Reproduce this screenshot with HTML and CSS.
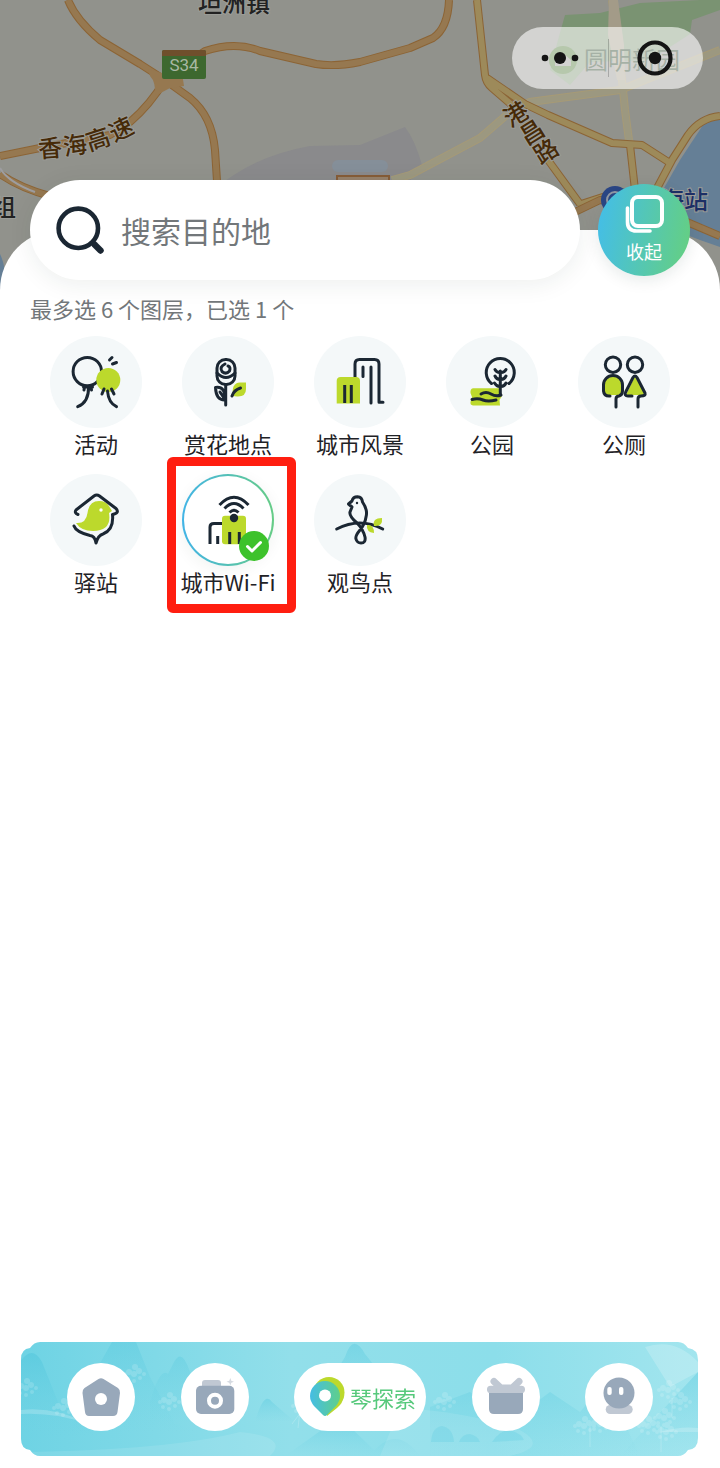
FILE: index.html
```html
<!DOCTYPE html>
<html lang="zh-CN">
<head>
    <meta charset="UTF-8" />
    <meta name="viewport" content="width=device-width, initial-scale=1.0" />
    <title>琴探索</title>
    <link rel="stylesheet" href="styles.css">
</head>
<body>
    <div class="app">
        <svg class="map" viewBox="0 0 720 300" preserveAspectRatio="xMidYMin slice">
            <rect width="720" height="300" fill="#91928c" />
            <!-- areas -->
            <path d="M225 181Q260 155 310 146L360 145 405 127Q415 140 422 165L410 181Z" fill="#8a8a8c" />
            <rect x="332" y="160" width="56" height="12" rx="6" fill="#858f99" />
            <path d="M565 15L600 13 640 3 700 0H720V10L692 20 690 34 650 60 590 62 570 85 550 70 558 40Z" fill="#7a9372" />
            <path d="M720 118L705 122 680 160 664 188 660 225 700 240 720 247Z" fill="#657f96" />
            <path d="M0 254Q8 270 4 300H0Z" fill="#657f96" />
            <!-- small roads -->
            <g fill="none" stroke="#a69a76" stroke-width="8">
                <path d="M392 180L410 175 480 138 510 112 530 102 620 90 720 50" />
                <path d="M612 0Q616 30 620 60L625 110 630 148" />
            </g>
            <g fill="none" stroke="#9c9880" stroke-width="6">
                <path d="M392 180L410 175 480 138 510 112 530 102 620 90 720 50" />
                <path d="M612 0Q616 30 620 60L625 110 630 148" />
            </g>
            <path d="M609 0H618L624 45 625 80H617L608 35Z" fill="#a39b88" />
            <!-- main roads -->
            <g class="road road-edge">
                <path d="M477 0L485 75Q486 83 492 88L520 112M487 78L525 104 548 115 612 143 642 145 670 163M548 160L580 204" />
                <path d="M630 145L635 190M578 205L615 193 655 192 672 160 688 135Q700 118 720 116" />
            </g>
            <g class="road road-yellow">
                <path d="M477 0L485 75Q486 83 492 88L520 112M487 78L525 104 548 115 612 143 642 145 670 163M548 160L580 204" />
                <path d="M630 145L635 190M578 205L615 193 655 192 672 160 688 135Q700 118 720 116" />
            </g>
            <g class="road road-edge">
                <path d="M68 0Q76 20 100 40L140 64 165 80M165 78L205 51Q235 41 260 51L316 64Q335 67 360 62L410 48 433 38Q448 28 449 0" />
                <path d="M165 80Q150 105 130 122L110 135 40 148 0 156M165 80L190 98Q212 116 215 150L217 181M0 174Q20 188 50 196M575 212L600 200 640 202 720 236" />
            </g>
            <g class="road road-orange">
                <path d="M68 0Q76 20 100 40L140 64 165 80M165 78L205 51Q235 41 260 51L316 64Q335 67 360 62L410 48 433 38Q448 28 449 0" />
                <path d="M165 80Q150 105 130 122L110 135 40 148 0 156M165 80L190 98Q212 116 215 150L217 181M0 174Q20 188 50 196M575 212L600 200 640 202 720 236" />
            </g>
            <path d="M148 69L162 73H182L184 86 170 88 155 96Q156 82 150 76Z" fill="#967850" />
            <path d="M0 168Q8 182 35 192" fill="none" stroke="#9d9da0" stroke-width="2" />
            <rect x="337" y="176" width="52" height="8" fill="#96806b" stroke="#865c38" stroke-width="2" />
            <!-- road sign -->
            <rect x="162" y="50" width="44" height="29" rx="2" fill="#3d682f" />
            <path d="M162 56V52q0-2 2-2H204q2 0 2 2V56Z" fill="#6f4f2c" />
            <text class="sign" x="184" y="71">S34</text>
            <!-- labels -->
            <g class="place">
                <text x="198" y="12">坦洲镇</text>
                <text x="-8" y="216">组</text>
            </g>
            <g class="road-name">
                <text transform="translate(50 148) rotate(-4)" y="9">香</text>
                <text transform="translate(75 145) rotate(-9)" y="9">海</text>
                <text transform="translate(98 139) rotate(-18)" y="9">高</text>
                <text transform="translate(121 129) rotate(-26)" y="9">速</text>
                <text transform="translate(516 114) rotate(-32)" y="9">港</text>
                <text transform="translate(532 132) rotate(-32)" y="9">昌</text>
                <text transform="translate(546 151) rotate(-32)" y="9">路</text>
            </g>
            <circle cx="563" cy="60" r="14" fill="#4a7631" />
            <path d="M555 66V60L563 53 571 60V66Z" fill="#91928c" />
            <text class="park-name" x="584" y="69">圆明新园</text>
            <circle cx="615" cy="200" r="14" fill="#2b4685" />
            <circle cx="615" cy="200" r="8" fill="none" stroke="#9299a6" stroke-width="2" />
            <text class="station-name" x="636" y="209">珠海站</text>
        </svg>

        <div class="capsule">
            <button type="button" class="capsule-btn" aria-label="更多">
                <svg width="40" height="16" viewBox="0 0 40 16" fill="#141414"><circle cx="5" cy="8" r="3.300" /><circle cx="20" cy="8" r="6" /><circle cx="35" cy="8" r="3.300" /></svg>
            </button>
            <button type="button" class="capsule-btn" aria-label="关闭">
                <svg width="36" height="36" viewBox="0 0 36 36"><circle cx="18" cy="18" r="15.5" fill="none" stroke="#141414" stroke-width="4.2" /><circle cx="18" cy="18" r="6.2" fill="#141414" /></svg>
            </button>
        </div>

        <main class="sheet">
            <div class="search-row">
                <label class="search-box">
                    <svg width="48" height="48" viewBox="0 0 48 48" fill="none" stroke="#1b2733" stroke-linecap="round"><circle cx="22.3" cy="22.3" r="19.7" stroke-width="4.6" /><path d="M38.5 38.5L44.5 44.5" stroke-width="6.4" /></svg>
                    <input type="text" id="searchInput" placeholder="搜索目的地" aria-label="搜索目的地" />
                </label>
                <button type="button" class="fold-btn">
                    <svg width="40" height="40" viewBox="0 0 40 40" fill="none" stroke="#fff" stroke-linecap="round"><rect x="8" y="3" width="30" height="29" rx="6" stroke-width="4" /><path d="M3.500 14V28Q3.500 37 12.500 37H26" stroke-width="3.600" /></svg>
                    <span>收起</span>
                </button>
            </div>

            <p class="hint">最多选 6 个图层，已选 1 个</p>

            <div class="layers">
                <button type="button" class="layer" aria-pressed="false">
                    <svg class="layer-icon" viewBox="0 0 92 92">
                        <circle class="line" cx="37.3" cy="35.6" r="14.2" />
                        <circle class="lime" cx="58.3" cy="44" r="12" />
                        <path class="line" d="M33.5 51H42.5M34.5 51L34 54M41 51L41.500 54M38.500 51Q39 66 27.700 70.700M57.500 55Q58.500 67 66.500 70.700M54 53L52 58M61.500 53L64 58" />
                        <path class="line" d="M59.5 24L62 21.5M62.5 28L66.5 26.5" />
                    </svg>
                    <span>活动</span>
                </button>
                <button type="button" class="layer" aria-pressed="false">
                    <svg class="layer-icon" viewBox="0 0 92 92">
                        <path class="lime" d="M51 60Q49 47 58 46.500H64V53Q64 61 55 60.500Z" />
                        <rect class="line" x="35" y="23.5" width="18" height="25" rx="8.5" />
                        <path class="line" d="M35 37Q44 46 53 37M43 28Q37 31 40 35.500Q44 39 47.500 35Q49 31 46 30" />
                        <path class="line" d="M43.700 49V69M33.500 51.500Q44 50 42.500 64Q34 64 33.500 51.500ZM38 56L42 62M50 60Q52 54 58.500 52" />
                    </svg>
                    <span>赏花地点</span>
                </button>
                <button type="button" class="layer" aria-pressed="false">
                    <svg class="layer-icon" viewBox="0 0 92 92">
                        <path class="line" d="M41 42V28Q41 23.500 45.500 23.500H60.500Q65 23.500 65 28V66.300H69M49 31V40.500M57 31V67" />
                        <path class="lime" d="M22.700 67.500V45Q22.700 41 26.700 41H42Q46 41 46 45V67.500Z" />
                        <path class="line flat" d="M30.700 49V67M37.300 49V67" />
                    </svg>
                    <span>城市风景</span>
                </button>
                <button type="button" class="layer" aria-pressed="false">
                    <svg class="layer-icon" viewBox="0 0 92 92">
                        <path class="lime" d="M27 52.300H54L56 60 53.500 64 54 69.500H27Q24 69 24.500 66L26 61 24.500 57Q24 53 27 52.300Z" />
                        <path class="line" d="M45.500 47.500A14 14 0 1 1 63 47.500M54.300 35V58M49 33.500Q51 37 54.300 36.500Q58 37 60 33.500M49 40Q51 44 54.300 43.500Q58 44 60 40M48.500 47Q51 51 54.300 50.500Q58 51 60 47" />
                        <path class="line" d="M35 58Q40 55 45 58T55 59M26 63.500Q32 62 37 64T50 64" />
                    </svg>
                    <span>公园</span>
                </button>
                <button type="button" class="layer" aria-pressed="false">
                    <svg class="layer-icon" viewBox="0 0 92 92">
                        <circle class="line" cx="35" cy="28.7" r="7.7" />
                        <circle class="line" cx="57" cy="28.7" r="7.7" />
                        <path class="lime" d="M25.500 49A9.500 9.500 0 0 1 44.500 49V59H29Q25.500 58 25.500 54ZM57 40L67 58Q66 60 60 59H48Z" />
                        <path class="line" d="M38 71V63Q38 60 41 60Q44.500 59 44.500 55V49A9.500 9.500 0 0 0 25.500 49V55Q26 60 31 60H32M60 71V63Q60 60 63 60Q68 60 67 57L59 41.500Q57 38.500 55 41.500L47.700 56Q46 60 50 60H54" />
                    </svg>
                    <span>公厕</span>
                </button>
                <button type="button" class="layer" aria-pressed="false">
                    <svg class="layer-icon" viewBox="0 0 92 92">
                        <path class="lime" d="M26 49Q36 50 37.500 39Q39 27 49 27Q56 27 59 32L62 37 59 39Q62 57 43 57Q31 57 26 49Z" />
                        <circle cx="51" cy="36" r="1.7" fill="#fff" />
                        <path class="line" d="M28 40.500Q24 39 26 36L44 22Q46.700 20 49.500 22L66 34.500Q70 39 62.500 40.500Q64 56 53 60Q48 61.500 46 69Q45 62 40 61.500Q26 58 24 52" />
                    </svg>
                    <span>驿站</span>
                </button>
                <button type="button" class="layer selected" aria-pressed="true">
                    <svg class="layer-icon" viewBox="2 2 88 88">
                        <path class="line flat" d="M28 70V53Q28 49.500 32 49.500H40M35.700 62V70" />
                        <rect class="lime" x="40" y="41.7" width="24" height="28.600" rx="3" />
                        <path class="line flat" d="M47.700 58V70M57.300 58V70" />
                        <circle cx="52" cy="44" r="4.2" fill="#1b2733" />
                        <path class="line flat" d="M37.500 31Q52 15.500 66.500 31M42.500 34.500Q52 24.500 61.500 34.500M47.500 38.500Q52 34 56.500 38.500" />
                    </svg>
                    <svg class="check" viewBox="0 0 30 30"><circle cx="15" cy="15" r="15" fill="#3dc22b" /><path d="M8.5 15.5L13 20 21.5 11.5" fill="none" stroke="#fff" stroke-width="3" stroke-linecap="round" stroke-linejoin="round" /></svg>
                    <span>城市Wi-Fi</span>
                </button>
                <button type="button" class="layer" aria-pressed="false">
                    <svg class="layer-icon" viewBox="0 0 92 92">
                        <path class="line" d="M22.700 55Q46 43 68.700 55" />
                        <path class="lime" d="M60 52Q58 44 68 44Q69 53 60 52ZM53 51Q60 50 60 59Q52 58 53 51Z" />
                        <path class="line" d="M34.500 30L38 27Q39 22.700 43.500 22.700Q48 23 48.500 28Q54 36 52 43Q51 50 46 56Q41 62 42 65Q43 69 47 69Q52 69 51 63Q49 55 43 49Q35 42 36 38L38 33Z" />
                        <circle cx="43" cy="29" r="1.2" fill="#1b2733" />
                    </svg>
                    <span>观鸟点</span>
                </button>
            </div>

            <nav class="tabbar">
                <svg class="tabbar-bg" viewBox="0 0 678 114" preserveAspectRatio="none">
                    <defs>
                        <linearGradient id="water" x2="1" y2="0">
                            <stop offset="0" stop-color="#6ed3e4" />
                            <stop offset="0.4" stop-color="#92dfea" />
                            <stop offset="0.7" stop-color="#8cdeea" />
                            <stop offset="1" stop-color="#a2e5ee" />
                        </linearGradient>
                        <linearGradient id="hill" x2="0" y2="1">
                            <stop offset="0" stop-color="#58c9de" stop-opacity="0.7" />
                            <stop offset="1" stop-color="#6fd2e4" stop-opacity="0" />
                        </linearGradient>
                        <linearGradient id="pin" x2="1" y2="0"><stop offset="0" stop-color="#45bde4" /><stop offset="1" stop-color="#5fcf8a" /></linearGradient>
                        <clipPath id="plate"><path d="M20 0H658Q664 0 668 6Q678 7 678 18V96Q678 107 668 108Q664 114 658 114H20Q14 114 10 108Q1 107 1 97V17Q1 7 10 6Q14 0 20 0Z" /></clipPath>
                        <g id="bloom">
                            <circle r="3" /><circle cx="5" cy="-3" r="3" /><circle cx="-5" cy="-2" r="3" /><circle cx="1" cy="-7" r="3" /><circle cx="6" cy="4" r="2" /><circle cx="-6" cy="5" r="2" /><circle cx="0" cy="7" r="2" /><circle cx="-9" cy="0" r="2" /><circle cx="10" cy="0" r="2" />
                        </g>
                    </defs>
                    <g clip-path="url(#plate)">
                        <rect width="678" height="114" fill="url(#water)" />
                        <g fill="url(#hill)">
                            <path d="M0 20Q12 2 22 20Q32 45 42 70L82 95H0Z" />
                            <path d="M50 90L75 30 92 0H116L130 35 155 82 180 90Z" opacity="0.6" />
                            <path d="M130 60Q140 25 148 32L154 20Q162 5 170 30L200 80H130Z" opacity="0.5" />
                            <path d="M235 80Q244 48 252 60L275 80Z" opacity="0.6" />
                            <path d="M285 80L325 15Q333-10 345 12L400 80Z" opacity="0.6" />
                            <path d="M265 114L320 75 360 114ZM350 114Q375 80 400 114Z" opacity="0.7" />
                            <path d="M410 65L450 50 490 80 530 50 560 70 585 40 620 114H410Z" opacity="0.5" />
                            <path d="M600 114L650 60 678 30V114Z" opacity="0.6" />
                        </g>
                        <g fill="#fff">
                            <path d="M0 68Q35 64 68 82Q35 70 0 72Z" opacity="0.2" />
                            <path d="M220 90Q270 95 250 114H0V110Q150 108 220 90Z" opacity="0.1" />
                            <path d="M650 45L625 5Q655-5 678 20V30ZM640 90Q660 84 678 86V90Z" opacity="0.2" />
                            <path d="M380 66Q450 70 500 88Q530 105 490 114H360Z" opacity="0.1" />
                        </g>
                        <path d="M411 100Q412 85 422 84Q433 86 434 100ZM439 100Q442 92 450 92Q458 94 460 100ZM472 100Q480 88 490 88Q502 92 504 98Z" fill="#5fcde0" opacity="0.3" />
                        <g fill="#fff" opacity="0.16">
                            <use href="#bloom" x="6" y="46" /><use href="#bloom" x="43" y="66" /><use href="#bloom" x="114" y="32" /><use href="#bloom" x="149" y="60" />
                            <use href="#bloom" x="282" y="64" /><use href="#bloom" x="424" y="60" /><use href="#bloom" x="564" y="84" /><use href="#bloom" x="580" y="82" />
                            <use href="#bloom" x="628" y="84" /><use href="#bloom" x="644" y="76" /><use href="#bloom" x="646" y="90" /><use href="#bloom" x="648" y="48" /><use href="#bloom" x="660" y="60" />
                        </g>
                        <path d="M570 84V105M641 84V110M652 56V76M280 68L278 86M284 66L272 82" stroke="#fff" stroke-width="1" opacity="0.2" />
                    </g>
                </svg>
                <a class="tab" href="#" aria-label="首页">
                    <svg viewBox="0 0 68 68"><path d="M31.500 16Q34 14.500 36.500 16L51 25Q53.500 27 53 30L50.500 49Q50 53 46 53H22Q18.500 53 18 49L15.500 30Q15 27 17.500 25Z" fill="#98a8ba" /><circle cx="34" cy="36" r="6" fill="#fff" /></svg>
                </a>
                <a class="tab" href="#" aria-label="拍照">
                    <svg viewBox="0 0 68 68"><rect x="21" y="17" width="19" height="10" rx="3" fill="#c0c8d3" /><rect x="15" y="22.7" width="38.3" height="28.3" rx="5" fill="#98a8ba" /><circle cx="34" cy="37.7" r="6" fill="none" stroke="#fff" stroke-width="4" /><path d="M49.300 15L50.300 17.700 53 18.700 50.300 19.700 49.300 22.500 48.300 19.700 45.500 18.700 48.300 17.700Z" fill="#d5dae1" /></svg>
                </a>
                <a class="tab active" href="#">
                    <svg viewBox="0 0 36 42"><path d="M35 20Q34 27 28 32L18 40V20Z" fill="#bcd92c" /><circle cx="20" cy="16.500" r="15.5" fill="#bcd92c" /><path d="M16 5A15 15 0 0 1 31 20Q31 25 27 30L18 39Q16 41 14 39L5 30Q1 25 1 20A15 15 0 0 1 16 5Z" fill="url(#pin)" /><circle cx="16" cy="19.500" r="6" fill="#fff" /></svg>
                    <span>琴探索</span>
                </a>
                <a class="tab" href="#" aria-label="礼物">
                    <svg viewBox="0 0 68 68"><path d="M22 18.500L31 27M47 18.500L38 27M30 25H39" stroke="#c0c8d3" stroke-width="7" stroke-linecap="round" /><path d="M17 28H51V46Q51 51 46 51H22Q17 51 17 46Z" fill="#98a8ba" /><rect x="15" y="22.7" width="38" height="7.3" rx="3.6" fill="#c0c8d3" /></svg>
                </a>
                <a class="tab" href="#" aria-label="我的">
                    <svg viewBox="0 0 68 68"><rect x="20.7" y="42" width="27" height="9" rx="4.5" fill="#c0c8d3" /><circle cx="34" cy="30" r="15.5" fill="#98a8ba" /><rect x="22.3" y="24" width="4.4" height="8" rx="2" fill="#fff" /><rect x="34" y="24" width="4.4" height="8" rx="2" fill="#fff" /></svg>
                </a>
            </nav>
        </main>
    </div>
    <script>
        document.querySelectorAll('.tab').forEach(tab => {
            tab.addEventListener('click', e => e.preventDefault());
        });
    </script>
</body>
</html>
```

FILE: styles.css
```css
* {
    box-sizing: border-box;
}

body {
    margin: 0;
    font-family: "Noto Sans CJK SC", sans-serif;
    color: #1f2226;
    background: #fff;
}

button,
input {
    font-family: inherit;
    color: inherit;
    border: none;
    background: none;
    padding: 0;
    margin: 0;
}

button {
    cursor: pointer;
}

svg {
    display: block;
}

.app {
    position: relative;
    min-height: 100vh;
    display: flex;
    flex-direction: column;
}

/* Map behind the sheet */
.map {
    position: absolute;
    top: 0;
    left: 0;
    width: 100%;
    height: 300px;
}

.road {
    fill: none;
    stroke-linejoin: round;
}

.road-edge {
    stroke: #8c6435;
    stroke-width: 8;
}

.road-yellow {
    stroke: #9d8a5a;
    stroke-width: 6;
}

.road-orange {
    stroke: #967850;
    stroke-width: 6;
}

.sign {
    font: 17px Roboto, sans-serif;
    fill: #a9b8a3;
    text-anchor: middle;
}

.place,
.road-name,
.park-name,
.station-name {
    font-size: 24px;
    font-weight: 500;
    paint-order: stroke;
    stroke: #9b9c97;
    stroke-width: 2px;
}

.place {
    fill: #222;
}

.road-name {
    fill: #462a08;
    text-anchor: middle;
}

.park-name {
    fill: #1f3d1f;
    stroke: none;
    font-weight: 400;
}

.station-name {
    fill: #1c2f66;
}

.capsule {
    position: absolute;
    top: 27px;
    right: 17px;
    width: 191px;
    height: 62px;
    border-radius: 31px;
    display: flex;
    background: rgba(255, 255, 255, 0.6);
}

.capsule-btn {
    flex: 1;
    display: flex;
    align-items: center;
    justify-content: center;
}

.capsule-btn + .capsule-btn {
    position: relative;
}

.capsule-btn + .capsule-btn::before {
    content: "";
    position: absolute;
    left: 0;
    top: 12px;
    bottom: 12px;
    width: 1px;
    background: rgba(0, 0, 0, 0.2);
}

/* Sheet */
.sheet {
    position: relative;
    flex: 1;
    display: flex;
    flex-direction: column;
    margin-top: 230px;
    border-radius: 60px 60px 0 0;
    background: #fff;
}

.search-row {
    display: flex;
    align-items: center;
    gap: 18px;
    margin-top: -50px;
    padding: 0 30px;
}

.search-box {
    flex: 1;
    display: flex;
    align-items: center;
    gap: 17px;
    height: 100px;
    padding: 0 26px;
    border-radius: 50px;
    background: #fff;
    box-shadow: 0 4px 24px rgba(20, 50, 40, 0.08);
}

.search-box input {
    flex: 1;
    min-width: 0;
    height: 48px;
    font-size: 30px;
    outline: none;
}

.search-box input::placeholder {
    color: #72777a;
    opacity: 1;
}

.fold-btn {
    width: 92px;
    height: 92px;
    border-radius: 50%;
    display: flex;
    flex-direction: column;
    align-items: center;
    padding-top: 10px;
    gap: 4px;
    font-size: 18px;
    line-height: 26px;
    color: #fff;
    background: linear-gradient(100deg, #42bdec, #66d07e);
    box-shadow: 0 4px 16px rgba(20, 50, 40, 0.1);
}

.hint {
    margin: 12px 30px;
    font-size: 22px;
    line-height: 32px;
    color: #72777a;
}

/* Layer picker */
.layers {
    display: grid;
    grid-template-columns: repeat(5, 1fr);
    row-gap: 16px;
    padding: 0 30px;
}

.layer {
    position: relative;
    display: flex;
    flex-direction: column;
    align-items: center;
    font-size: 22px;
    line-height: 30px;
    white-space: nowrap;
}

.layer-icon {
    width: 92px;
    height: 92px;
    border-radius: 50%;
    background: #f4f8f9;
}

.line {
    fill: none;
    stroke: #1b2733;
    stroke-width: 3;
    stroke-linecap: round;
    stroke-linejoin: round;
}

.flat {
    stroke-linecap: butt;
}

.lime {
    fill: #bcd92c;
}

.selected .layer-icon {
    border: 2px solid transparent;
    background: linear-gradient(#fff, #fff) padding-box, linear-gradient(90deg, #42b4e6, #66cc86) border-box;
    box-shadow: 0 4px 16px rgba(20, 50, 40, 0.06);
}

.check {
    position: absolute;
    top: 57px;
    left: calc(50% + 11px);
    width: 30px;
    height: 30px;
}

/* Red frame round the selected layer */
.selected::after {
    content: "";
    position: absolute;
    top: -17px;
    bottom: -17px;
    left: 5px;
    right: -2px;
    border: 9px solid #ff1e10;
    border-radius: 6px;
}

/* Bottom bar */
.tabbar {
    position: relative;
    display: flex;
    align-items: center;
    justify-content: space-between;
    height: 114px;
    margin: auto 22px 12px 20px;
    padding: 0 45px 4px 47px;
}

.tabbar-bg {
    position: absolute;
    top: 0;
    left: 0;
    width: 100%;
    height: 100%;
}

.tab {
    position: relative;
    width: 68px;
    height: 68px;
    border-radius: 34px;
    background: #fff;
}

.tab.active {
    display: flex;
    align-items: center;
    gap: 5px;
    width: 132px;
    padding-left: 15px;
    font-size: 22px;
    line-height: 30px;
    color: #57c97c;
    text-decoration: none;
}

.tab.active svg {
    width: 36px;
    height: 42px;
}
```
